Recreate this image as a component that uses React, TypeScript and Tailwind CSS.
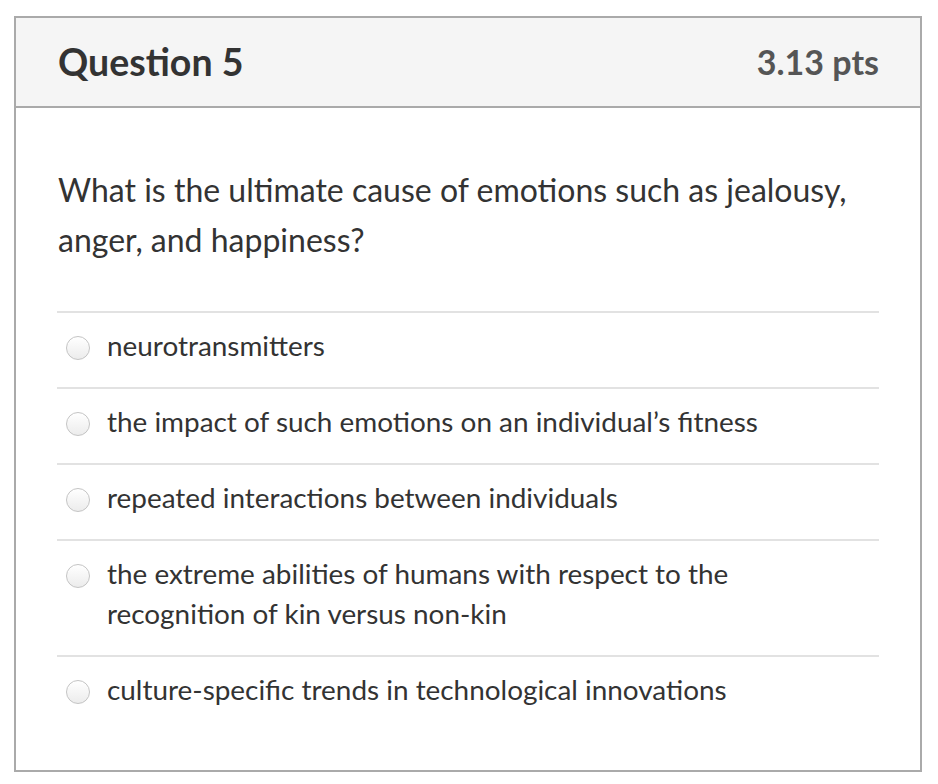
import React from "react";

const answers = [
  "neurotransmitters",
  "the impact of such emotions on an individual’s fitness",
  "repeated interactions between individuals",
  "the extreme abilities of humans with respect to the recognition of kin versus non-kin",
  "culture-specific trends in technological innovations",
];

function Radio() {
  return (
    <span className="mt-[11px] block h-[24px] w-[24px] shrink-0 rounded-full border border-[#c4c4c4] bg-gradient-to-b from-white to-[#ececec] shadow-[inset_0_1px_1px_rgba(255,255,255,0.8)]" />
  );
}

export default function App() {
  return (
    <div className="min-h-[784px] w-[938px] bg-white pl-[14px] pt-[16px] font-['Lato','Noto_Sans',sans-serif] text-[#333]">
      <div className="w-[908px] border-2 border-[#aaaaaa]">
        <div className="flex h-[90px] items-center justify-between border-b-2 border-[#aaaaaa] bg-[#f5f5f5] pl-[42px] pr-[41px]">
          <h2 className="text-[37.5px] font-bold leading-none text-[#333]">Question 5</h2>
          <span className="text-[34px] font-bold leading-none text-[#555]">3.13 pts</span>
        </div>
        <div className="px-[41px] pb-[39px] pt-[57px]">
          <p className="pl-[1px] pr-[20px] text-[32px] leading-[50px] text-[#333]">
            What is the ultimate cause of emotions such as jealousy, anger, and happiness?
          </p>
          <div className="mt-[46px]">
            {answers.map((a) => (
              <div
                key={a}
                className="flex items-start gap-[17px] border-t-2 border-[#e2e2e2] pb-[22px] pl-[9px] pt-[12px]"
              >
                <Radio />
                <span className="pr-[60px] text-[27.9px] leading-[40px] text-[#333]">{a}</span>
              </div>
            ))}
          </div>
        </div>
      </div>
    </div>
  );
}
